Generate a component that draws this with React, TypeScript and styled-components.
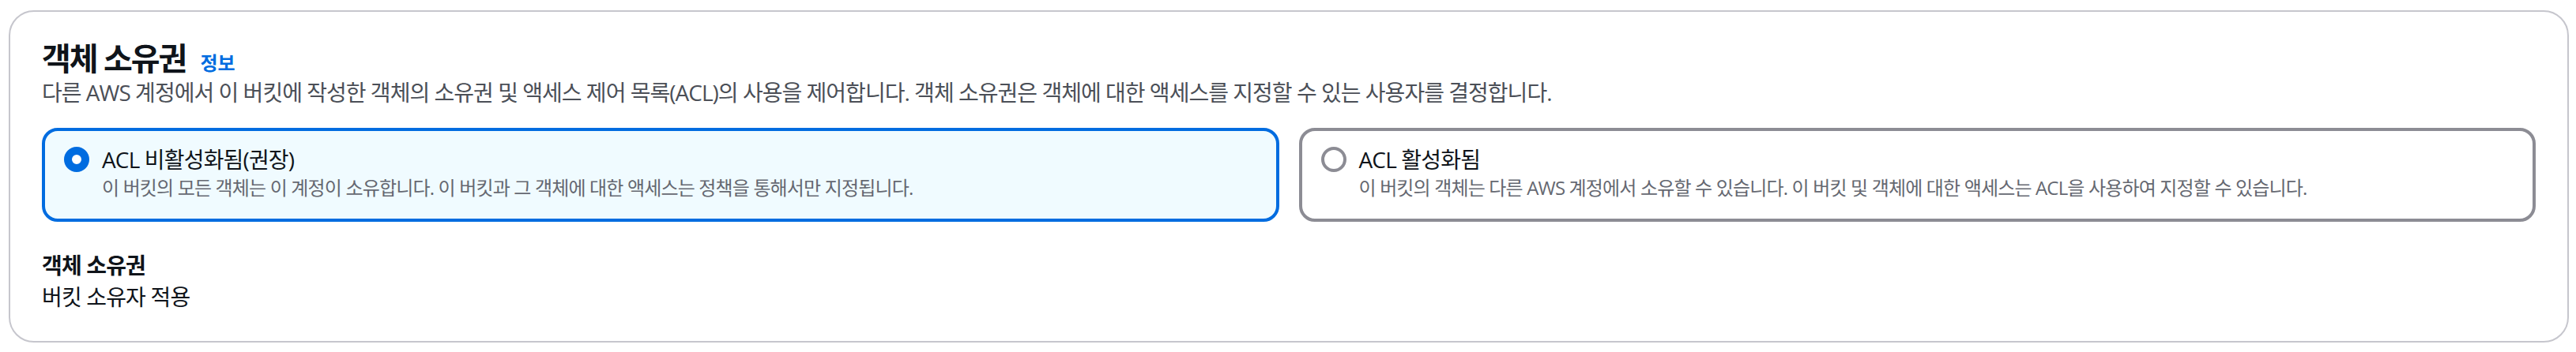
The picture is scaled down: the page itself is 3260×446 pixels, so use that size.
import React, { useState } from 'react'
import styled, { createGlobalStyle } from 'styled-components'

const GlobalStyle = createGlobalStyle`
  html, body {
    margin: 0;
    padding: 0;
    background: #ffffff;
  }
  body {
    font-family: 'Open Sans', 'Noto Sans CJK KR', 'Noto Sans', sans-serif;
    color: #0f141a;
    -webkit-font-smoothing: antialiased;
  }
`

const Page = styled.div`
  padding: 13px 9px 11px 11px;
`

const Container = styled.section`
  border: 2px solid #c6c6cd;
  border-radius: 32px;
  padding: 37px 40px 36px 40px;
  background: #ffffff;
`

const HeaderRow = styled.div`
  display: flex;
  align-items: baseline;
  gap: 18px;
`

const Title = styled.h2`
  margin: 0;
  font-size: 40px;
  line-height: 44px;
  font-weight: 700;
  letter-spacing: -0.05em;
  color: #0f141a;
`

const InfoLink = styled.a`
  font-size: 24px;
  line-height: 32px;
  font-weight: 700;
  color: #006ce0;
  text-decoration: none;
  cursor: pointer;
`

const Description = styled.p`
  margin: 1px 0 0 0;
  font-size: 28px;
  line-height: 40px;
  letter-spacing: -0.035em;
  color: #4b4f57;
`

const Tiles = styled.div`
  display: grid;
  grid-template-columns: 1fr 1fr;
  gap: 25px;
  margin-top: 25px;
`

const Tile = styled.label<{ $checked: boolean }>`
  display: flex;
  align-items: flex-start;
  gap: 16px;
  padding: 16px 24px 23px 24px;
  border: 4px solid ${({ $checked }) => ($checked ? '#006ce0' : '#8c8c94')};
  border-radius: 20px;
  background: ${({ $checked }) => ($checked ? '#f0fbff' : '#ffffff')};
  cursor: pointer;
`

const RadioCircle = styled.span<{ $checked: boolean }>`
  flex: none;
  box-sizing: border-box;
  width: 32px;
  height: 32px;
  margin-top: 4px;
  border-radius: 50%;
  border: ${({ $checked }) =>
    $checked ? '10px solid #006ce0' : '4px solid #8c8c94'};
  background: #ffffff;
`

const TileText = styled.div`
  display: flex;
  flex-direction: column;
`

const TileLabel = styled.span`
  font-size: 28px;
  line-height: 40px;
  letter-spacing: -0.03em;
  color: #0f141a;
`

const TileDescription = styled.span`
  font-size: 24px;
  line-height: 32px;
  letter-spacing: -0.035em;
  color: #656871;
`

const Field = styled.div`
  margin-top: 35px;
`

const FieldLabel = styled.div`
  font-size: 28px;
  line-height: 40px;
  font-weight: 700;
  letter-spacing: -0.03em;
  color: #0f141a;
`

const FieldValue = styled.div`
  font-size: 28px;
  line-height: 40px;
  letter-spacing: -0.03em;
  color: #0f141a;
`

const options = [
  {
    value: 'disabled',
    label: 'ACL 비활성화됨(권장)',
    description:
      '이 버킷의 모든 객체는 이 계정이 소유합니다. 이 버킷과 그 객체에 대한 액세스는 정책을 통해서만 지정됩니다.'
  },
  {
    value: 'enabled',
    label: 'ACL 활성화됨',
    description:
      '이 버킷의 객체는 다른 AWS 계정에서 소유할 수 있습니다. 이 버킷 및 객체에 대한 액세스는 ACL을 사용하여 지정할 수 있습니다.'
  }
]

const App = () => {
  const [selected, setSelected] = useState('disabled')

  return (
    <Page>
      <GlobalStyle />
      <Container>
        <HeaderRow>
          <Title>객체 소유권</Title>
          <InfoLink>정보</InfoLink>
        </HeaderRow>
        <Description>
          다른 AWS 계정에서 이 버킷에 작성한 객체의 소유권 및 액세스 제어 목록(ACL)의 사용을 제어합니다. 객체 소유권은 객체에 대한 액세스를 지정할 수 있는 사용자를 결정합니다.
        </Description>
        <Tiles>
          {options.map((opt) => {
            const checked = selected === opt.value
            return (
              <Tile
                key={opt.value}
                $checked={checked}
                onClick={() => setSelected(opt.value)}
              >
                <RadioCircle $checked={checked} />
                <TileText>
                  <TileLabel>{opt.label}</TileLabel>
                  <TileDescription>{opt.description}</TileDescription>
                </TileText>
              </Tile>
            )
          })}
        </Tiles>
        <Field>
          <FieldLabel>객체 소유권</FieldLabel>
          <FieldValue>버킷 소유자 적용</FieldValue>
        </Field>
      </Container>
    </Page>
  )
}

export default App
